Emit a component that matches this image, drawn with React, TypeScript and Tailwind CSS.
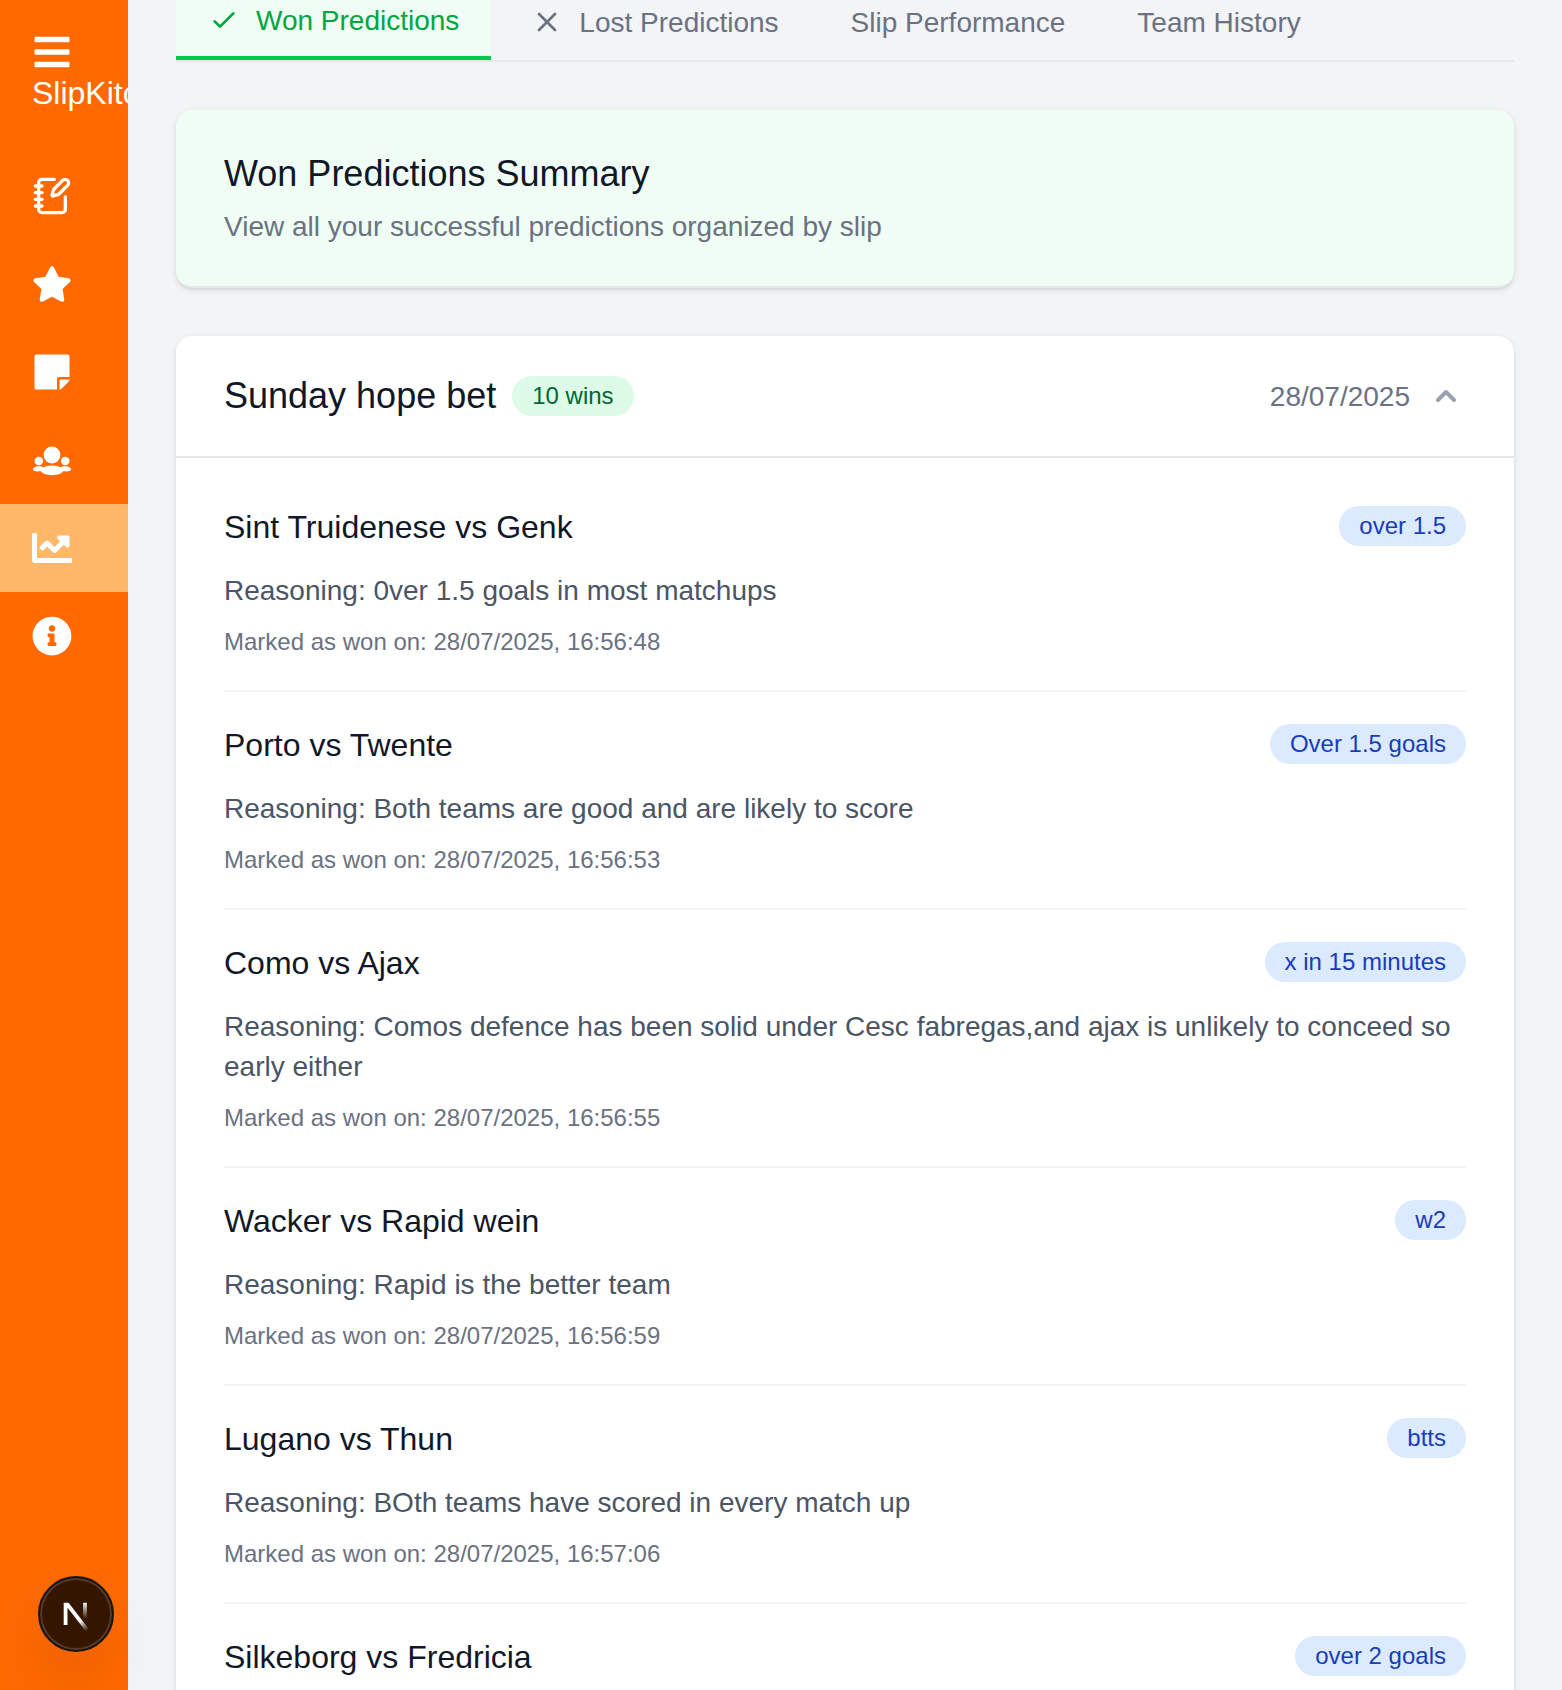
import React, { useState } from "react";
import { FaBars, FaStar, FaStickyNote, FaChartLine, FaInfoCircle } from "react-icons/fa";
import { LuNotebookPen } from "react-icons/lu";

type Prediction = { match: string; pick: string; reasoning: string; marked: string };
type IconProps = { className?: string };

const predictions: Prediction[] = [
  { match: "Sint Truidenese vs Genk", pick: "over 1.5", reasoning: "0ver 1.5 goals in most matchups", marked: "28/07/2025, 16:56:48" },
  { match: "Porto vs Twente", pick: "Over 1.5 goals", reasoning: "Both teams are good and are likely to score", marked: "28/07/2025, 16:56:53" },
  {
    match: "Como vs Ajax",
    pick: "x in 15 minutes",
    reasoning: "Comos defence has been solid under Cesc fabregas,and ajax is unlikely to conceed so early either",
    marked: "28/07/2025, 16:56:55",
  },
  { match: "Wacker vs Rapid wein", pick: "w2", reasoning: "Rapid is the better team", marked: "28/07/2025, 16:56:59" },
  { match: "Lugano vs Thun", pick: "btts", reasoning: "BOth teams have scored in every match up", marked: "28/07/2025, 16:57:06" },
  { match: "Silkeborg vs Fredricia", pick: "over 2 goals", reasoning: "Both teams score often", marked: "28/07/2025, 16:57:10" },
];

function PeopleIcon({ className }: IconProps) {
  return (
    <svg viewBox="0 0 40 40" fill="currentColor" className={className}>
      <circle cx="20" cy="15" r="8.4" />
      <circle cx="6.8" cy="21" r="4.3" />
      <circle cx="33.2" cy="21" r="4.3" />
      <path d="M20 25.4c4 0 7 .8 8.6 2 .8-.7 2.4-1.1 4.4-1.1 3.6 0 6 1.500 6 3.200 0 1.200-1.800 1.900-4.600 1.900-1.100 0-2.300 0-3.300-.1-1.300 2.200-5.600 3.900-11.100 3.900s-9.800-1.700-11.100-3.900c-1 .1-2.200.1-3.300.1-2.800 0-4.600-.7-4.600-1.900 0-1.700 2.400-3.200 6-3.200 2 0 3.600.4 4.400 1.100 1.600-1.200 4.600-2 8.600-2z" />
    </svg>
  );
}

function CheckIcon({ className }: IconProps) {
  return (
    <svg viewBox="0 0 24 24" fill="none" stroke="currentColor" strokeWidth="2" strokeLinecap="round" strokeLinejoin="round" className={className}>
      <path d="M5 13l4 4L19 7" />
    </svg>
  );
}

function CrossIcon({ className }: IconProps) {
  return (
    <svg viewBox="0 0 24 24" fill="none" stroke="currentColor" strokeWidth="2" strokeLinecap="round" strokeLinejoin="round" className={className}>
      <path d="M6 18L18 6M6 6l12 12" />
    </svg>
  );
}

const navItems = [
  { label: "Slips", icon: LuNotebookPen },
  { label: "Favourites", icon: FaStar },
  { label: "Notes", icon: FaStickyNote },
  { label: "Community", icon: PeopleIcon },
  { label: "Statistics", icon: FaChartLine, active: true },
  { label: "About", icon: FaInfoCircle },
];

const tabs = [
  { label: "Won Predictions", icon: CheckIcon },
  { label: "Lost Predictions", icon: CrossIcon },
  { label: "Slip Performance" },
  { label: "Team History" },
];

function Sidebar() {
  return (
    <aside className="h-full w-32 shrink-0 overflow-hidden bg-[#ff6900] text-white">
      <button type="button" aria-label="Toggle menu" className="ml-8 mt-8 block text-left">
        <FaBars className="size-10" />
      </button>
      <p className="ml-8 h-12 text-[32px] leading-[42px]">SlipKitchen</p>
      <nav className="mt-8">
        {navItems.map(({ label, icon: Icon, active }) => (
          <a
            key={label}
            href="#"
            aria-label={label}
            className={active ? "block bg-[#ffb86a] px-8 py-6" : "block px-8 py-6"}
          >
            <Icon className="size-10" />
          </a>
        ))}
      </nav>
    </aside>
  );
}

function Tabs() {
  const [current, setCurrent] = useState(0);
  return (
    <div role="tablist" className="-mt-4 flex gap-2 border-b-2 border-gray-200">
      {tabs.map(({ label, icon: Icon }, i) => (
        <button
          key={label}
          type="button"
          role="tab"
          aria-selected={i === current}
          onClick={() => setCurrent(i)}
          className={
            i === current
              ? "flex items-center gap-4 border-b-4 border-[#00c950] bg-[#f0fdf4] px-8 py-4 text-[28px] leading-10 text-[#00a63e]"
              : "flex items-center gap-4 px-8 py-4 text-[28px] leading-10 text-[#6a7282]"
          }
        >
          {Icon && <Icon className="size-8" />}
          <span className="pt-0.5 leading-[38px]">{label}</span>
        </button>
      ))}
    </div>
  );
}

function PredictionRow({ match, pick, reasoning, marked }: Prediction) {
  return (
    <li className="border-b-2 border-gray-100 py-8 first:pt-0">
      <div className="flex items-start justify-between">
        <h3 className="text-[32px] leading-[42px] text-[#101828]">{match}</h3>
        <span className="rounded-full bg-[#dbeafe] px-5 py-1 text-2xl leading-8 text-[#193cb8]">{pick}</span>
      </div>
      <p className="mt-[23px] text-[28px] leading-10 text-[#4a5565]">Reasoning: {reasoning}</p>
      <p className="mt-[15px] text-2xl leading-8 text-[#6a7282]">Marked as won on: {marked}</p>
    </li>
  );
}

function SlipCard() {
  const [open, setOpen] = useState(true);
  return (
    <section className="mt-12 overflow-hidden rounded-2xl bg-white shadow-[0_2px_6px_rgba(0,0,0,0.1),0_2px_4px_-2px_rgba(0,0,0,0.1)]">
      <button
        type="button"
        aria-expanded={open}
        onClick={() => setOpen(!open)}
        className="flex w-full items-center justify-between border-b-2 border-gray-200 px-12 py-9 text-left"
      >
        <span className="flex items-center gap-4">
          <span className="text-4xl leading-[48px] text-[#101828]">Sunday hope bet</span>
          <span className="rounded-full bg-[#dcfce7] px-5 py-1 text-2xl leading-8 text-[#016630]">10 wins</span>
        </span>
        <span className="flex items-center gap-4 text-[28px] text-[#6a7282]">
          <span className="pt-0.5 leading-[38px]">28/07/2025</span>
          <svg viewBox="0 0 20 20" fill="currentColor" className={open ? "size-10 text-[#99a1af]" : "size-10 rotate-180 text-[#99a1af]"}>
            <path
              fillRule="evenodd"
              d="M14.707 12.707a1 1 0 01-1.414 0L10 9.414l-3.293 3.293a1 1 0 01-1.414-1.414l4-4a1 1 0 011.414 0l4 4a1 1 0 010 1.414z"
            />
          </svg>
        </span>
      </button>
      {open && (
        <ul className="p-12">
          {predictions.map((p) => (
            <PredictionRow key={p.match} {...p} />
          ))}
        </ul>
      )}
    </section>
  );
}

function DevBadge() {
  return (
    <button
      type="button"
      aria-label="Open developer tools"
      className="fixed bottom-[38px] left-[38px] size-[76px] rounded-full border-2 border-[#171717] bg-[#331500] shadow-[inset_0_0_0_2px_#5a3a26,0_32px_64px_-16px_rgba(0,0,0,0.24)]"
    >
      <svg viewBox="0 0 72 72" fill="none" className="size-[72px]">
        <g clipPath="url(#logo-clip)">
          <path d="M47.5 52.4 L25.600 24 V47" stroke="url(#diag)" strokeWidth="3.8" />
          <path d="M45 24 V47" stroke="url(#stem)" strokeWidth="3.8" />
        </g>
        <defs>
          <clipPath id="logo-clip">
            <rect x="20" y="24.7" width="32" height="32" />
          </clipPath>
          <linearGradient id="diag" gradientUnits="userSpaceOnUse" x1="39.500" y1="43" x2="47" y2="53">
            <stop stopColor="white" />
            <stop offset="1" stopColor="white" stopOpacity="0" />
          </linearGradient>
          <linearGradient id="stem" gradientUnits="userSpaceOnUse" x1="45" y1="24" x2="45" y2="41">
            <stop stopColor="white" />
            <stop offset="1" stopColor="white" stopOpacity="0" />
          </linearGradient>
        </defs>
      </svg>
    </button>
  );
}

export default function App() {
  return (
    <div className="flex h-screen overflow-hidden bg-gray-100 font-['Liberation_Sans',Arial,sans-serif]">
      <Sidebar />
      <main className="min-w-0 flex-1 overflow-x-hidden overflow-y-auto px-12 [scrollbar-width:none]">
        <Tabs />
        <section className="mt-12 overflow-hidden rounded-2xl border-b-2 border-gray-200 bg-[#f0fdf4] px-12 py-10 shadow-[0_2px_6px_rgba(0,0,0,0.1),0_2px_4px_-2px_rgba(0,0,0,0.1)]">
          <h2 className="text-4xl leading-[48px] text-[#101828]">Won Predictions Summary</h2>
          <p className="mt-2 pt-0.5 text-[28px] leading-[38px] text-[#6a7282]">View all your successful predictions organized by slip</p>
        </section>
        <SlipCard />
      </main>
      <DevBadge />
    </div>
  );
}
